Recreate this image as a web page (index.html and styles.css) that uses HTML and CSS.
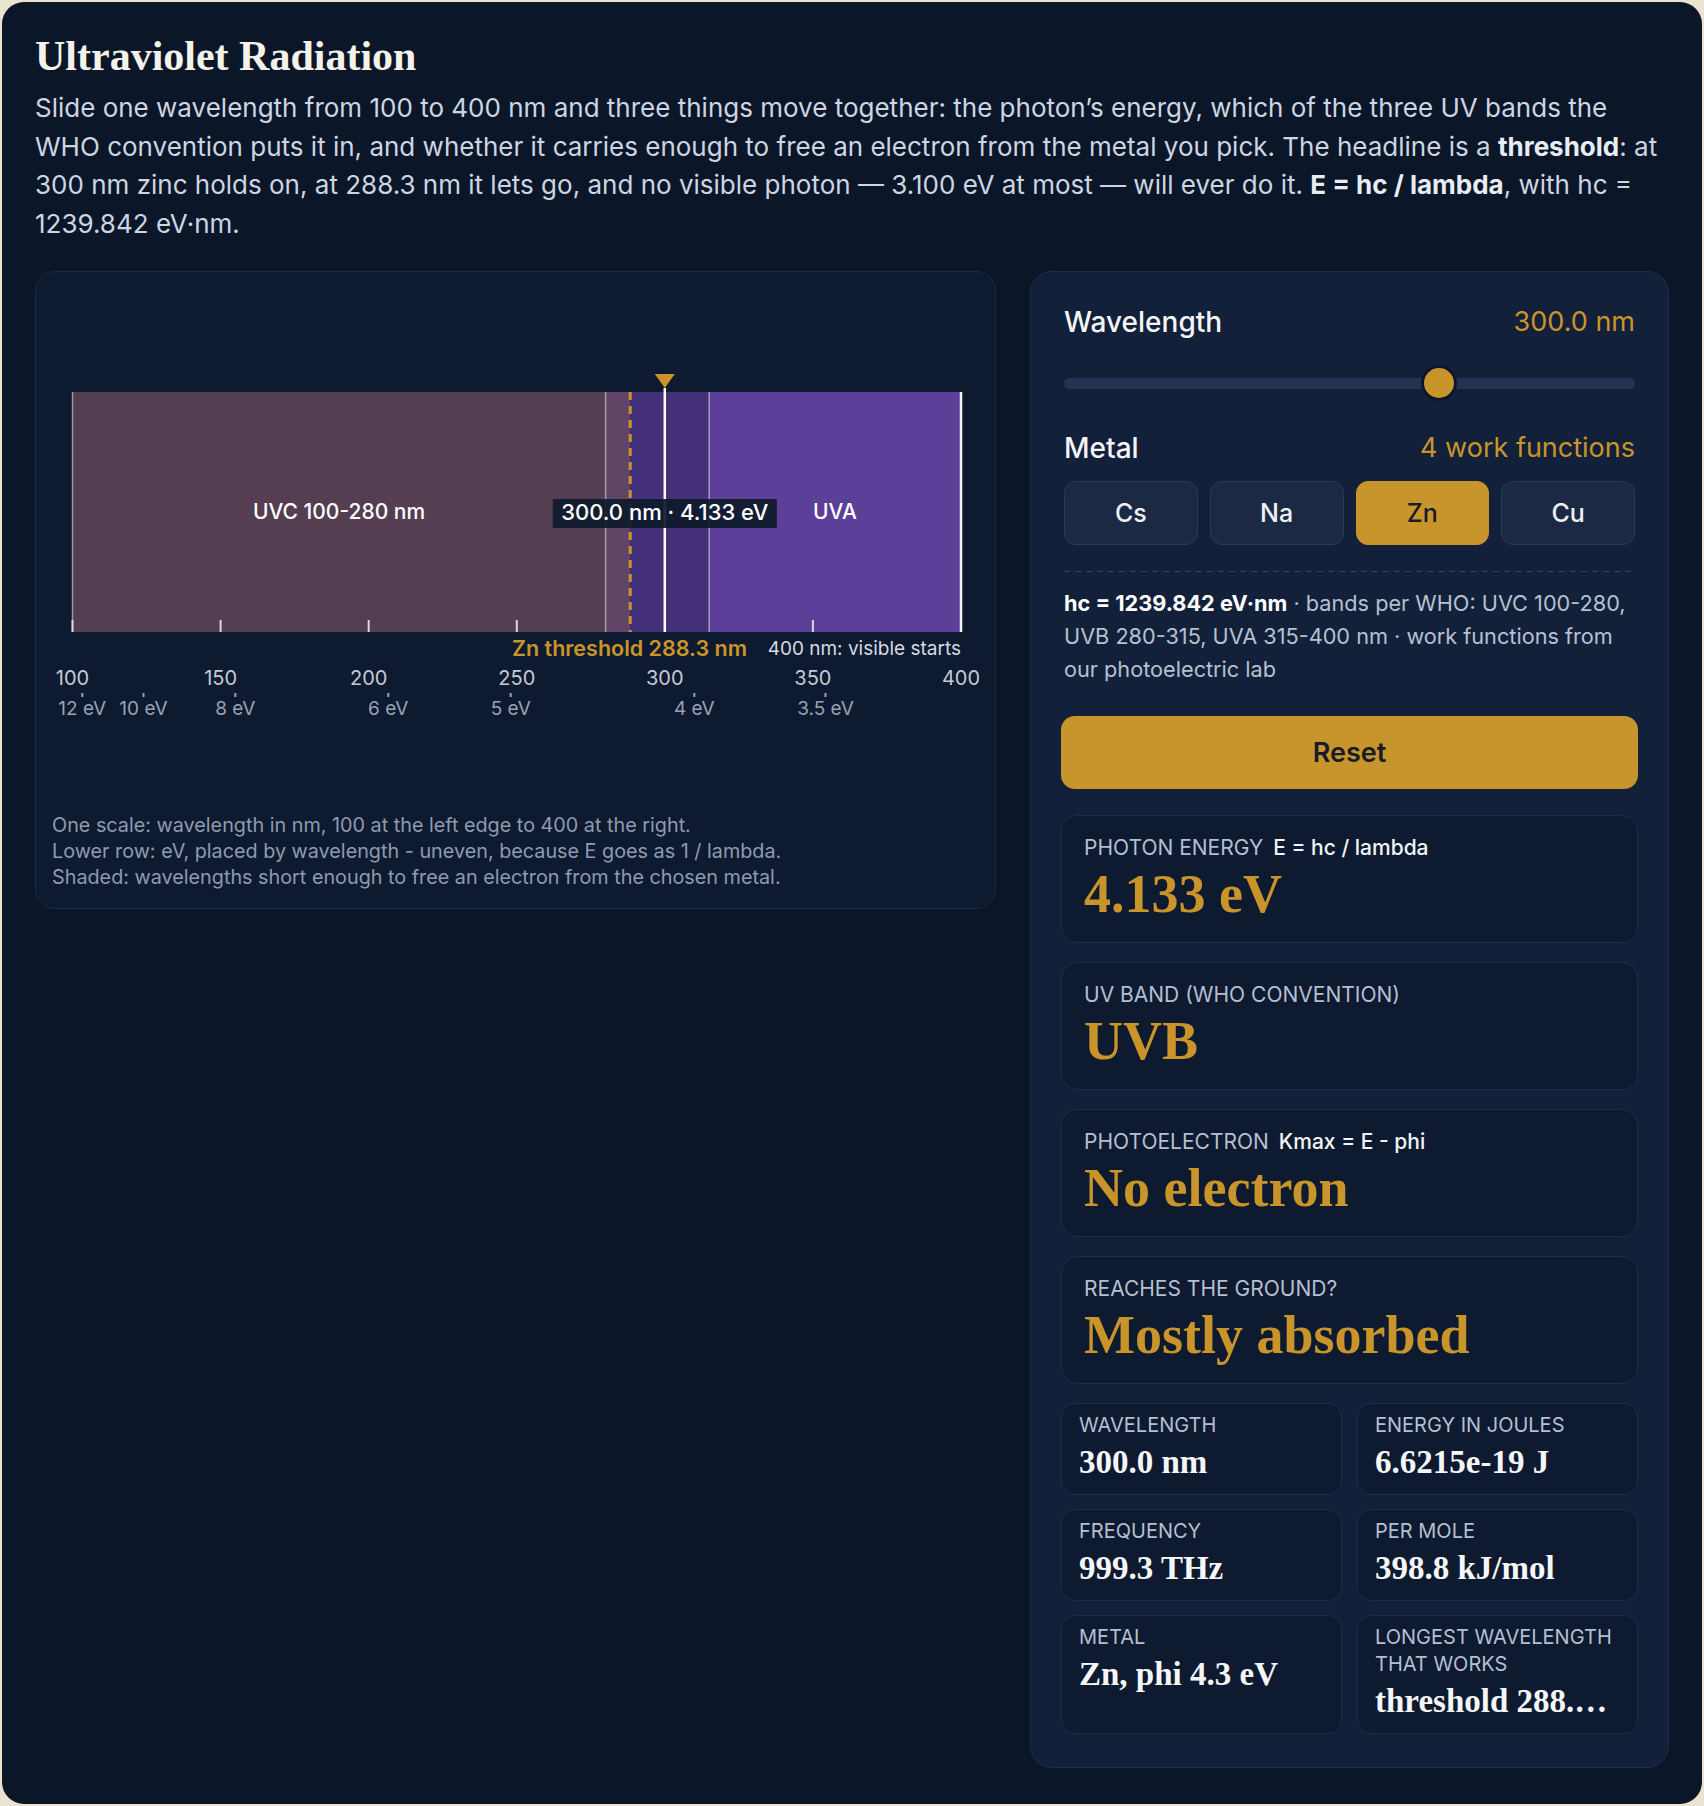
FILE: index.html
```html
<!DOCTYPE html>
<html lang="en">
<head>
    <meta charset="UTF-8">
    <meta name="viewport" content="width=device-width, initial-scale=1.0">
    <title>Ultraviolet Radiation</title>
    <link rel="stylesheet" href="styles.css">
</head>
<body>
    <div class="app">
        <header>
            <h1>Ultraviolet Radiation</h1>
            <p class="intro">Slide one wavelength from 100 to 400 nm and three things move together: the photon’s energy, which of the three UV bands the WHO convention puts it in, and whether it carries enough to free an electron from the metal you pick. The headline is a <b>threshold</b>: at 300 nm zinc holds on, at 288.3 nm it lets go, and no visible photon — 3.100 eV at most — will ever do it. <b>E = hc / lambda</b>, with hc = 1239.842 eV·nm.</p>
        </header>

        <main class="layout">
            <section class="chart-card">
                <svg class="spectrum" width="927" height="500" viewBox="0 0 927 500">
                    <!-- bands -->
                    <rect x="20.5" y="104" width="533.1" height="240" fill="#553e52"/>
                    <rect x="553.6" y="104" width="24.6" height="240" fill="#614566"/>
                    <rect x="578.2" y="104" width="79" height="240" fill="#45307a"/>
                    <rect x="657.2" y="104" width="251.8" height="240" fill="#5c3f99"/>

                    <!-- band edges -->
                    <line x1="20.5" y1="104" x2="20.5" y2="344" class="edge"/>
                    <line x1="553.6" y1="104" x2="553.6" y2="344" class="edge"/>
                    <line x1="657.2" y1="104" x2="657.2" y2="344" class="edge"/>
                    <line x1="909" y1="104" x2="909" y2="344" class="visible-edge"/>

                    <!-- nm ticks -->
                    <g class="tick">
                        <line x1="20.5" y1="332" x2="20.5" y2="344"/>
                        <line x1="168.6" y1="332" x2="168.6" y2="344"/>
                        <line x1="316.7" y1="332" x2="316.7" y2="344"/>
                        <line x1="464.8" y1="332" x2="464.8" y2="344"/>
                        <line x1="760.9" y1="332" x2="760.9" y2="344"/>
                    </g>

                    <text x="287" y="225" class="band-label">UVC 100-280 nm</text>
                    <text x="783" y="225" class="band-label">UVA</text>

                    <!-- threshold + current wavelength -->
                    <line x1="578.2" y1="104" x2="578.2" y2="344" class="threshold"/>
                    <line x1="612.8" y1="100" x2="612.8" y2="344" class="current"/>
                    <polygon points="602.8,86 622.8,86 612.8,100" fill="#c9952b"/>

                    <rect x="500.8" y="211" width="224" height="29" class="value-box"/>
                    <text x="612.8" y="226" class="value-label">300.0 nm · 4.133 eV</text>

                    <text x="695" y="362" class="threshold-label">Zn threshold 288.3 nm</text>
                    <text x="909" y="362" class="visible-label">400 nm: visible starts</text>

                    <!-- wavelength axis -->
                    <g class="axis-nm">
                        <text x="20.5" y="392">100</text>
                        <text x="168.6" y="392">150</text>
                        <text x="316.7" y="392">200</text>
                        <text x="464.8" y="392">250</text>
                        <text x="612.8" y="392">300</text>
                        <text x="760.9" y="392">350</text>
                        <text x="909" y="392">400</text>
                    </g>

                    <!-- energy row, placed by wavelength -->
                    <g class="ev-tick">
                        <line x1="30.3" y1="405" x2="30.3" y2="409"/>
                        <line x1="91.5" y1="405" x2="91.5" y2="409"/>
                        <line x1="183.3" y1="405" x2="183.3" y2="409"/>
                        <line x1="336.3" y1="405" x2="336.3" y2="409"/>
                        <line x1="458.7" y1="405" x2="458.7" y2="409"/>
                        <line x1="642.3" y1="405" x2="642.3" y2="409"/>
                        <line x1="773.5" y1="405" x2="773.5" y2="409"/>
                    </g>
                    <g class="axis-ev">
                        <text x="30.3" y="422">12 eV</text>
                        <text x="91.5" y="422">10 eV</text>
                        <text x="183.3" y="422">8 eV</text>
                        <text x="336.3" y="422">6 eV</text>
                        <text x="458.7" y="422">5 eV</text>
                        <text x="642.3" y="422">4 eV</text>
                        <text x="773.5" y="422">3.5 eV</text>
                    </g>
                </svg>
                <div class="chart-notes">
                    <div>One scale: wavelength in nm, 100 at the left edge to 400 at the right.</div>
                    <div>Lower row: eV, placed by wavelength - uneven, because E goes as 1 / lambda.</div>
                    <div>Shaded: wavelengths short enough to free an electron from the chosen metal.</div>
                </div>
            </section>

            <aside class="panel">
                <div class="controls">
                    <div class="control-row">
                        <span class="control-name">Wavelength</span>
                        <span class="control-value">300.0 nm</span>
                    </div>
                    <input type="range" class="slider" min="100" max="400" step="0.1" value="300">

                    <div class="control-row metal-row">
                        <span class="control-name">Metal</span>
                        <span class="control-value">4 work functions</span>
                    </div>
                    <div class="metals">
                        <button type="button" class="metal">Cs</button>
                        <button type="button" class="metal">Na</button>
                        <button type="button" class="metal active">Zn</button>
                        <button type="button" class="metal">Cu</button>
                    </div>

                    <div class="divider"></div>
                    <p class="source"><b>hc = 1239.842 eV·nm</b> · bands per WHO: UVC 100-280, UVB 280-315, UVA 315-400 nm · work functions from our photoelectric lab</p>
                </div>

                <button type="button" class="reset">Reset</button>

                <div class="result">
                    <div class="result-label"><span class="cap">Photon energy</span><span class="formula">E = hc / lambda</span></div>
                    <div class="result-value">4.133 eV</div>
                </div>
                <div class="result">
                    <div class="result-label"><span class="cap">UV band (WHO convention)</span></div>
                    <div class="result-value">UVB</div>
                </div>
                <div class="result">
                    <div class="result-label"><span class="cap">Photoelectron</span><span class="formula">Kmax = E - phi</span></div>
                    <div class="result-value">No electron</div>
                </div>
                <div class="result">
                    <div class="result-label"><span class="cap">Reaches the ground?</span></div>
                    <div class="result-value">Mostly absorbed</div>
                </div>

                <div class="stats">
                    <div class="stat">
                        <div class="stat-label">Wavelength</div>
                        <div class="stat-value">300.0 nm</div>
                    </div>
                    <div class="stat">
                        <div class="stat-label">Energy in joules</div>
                        <div class="stat-value">6.6215e-19 J</div>
                    </div>
                    <div class="stat">
                        <div class="stat-label">Frequency</div>
                        <div class="stat-value">999.3 THz</div>
                    </div>
                    <div class="stat">
                        <div class="stat-label">Per mole</div>
                        <div class="stat-value">398.8 kJ/mol</div>
                    </div>
                    <div class="stat">
                        <div class="stat-label">Metal</div>
                        <div class="stat-value">Zn, phi 4.3 eV</div>
                    </div>
                    <div class="stat">
                        <div class="stat-label">Longest wavelength that works</div>
                        <div class="stat-value">threshold 288.3 nm</div>
                    </div>
                </div>
            </aside>
        </main>
    </div>
</body>
</html>
```

FILE: styles.css
```css
* {
    box-sizing: border-box;
}
body {
    margin: 0;
    background-color: #e9e3cf;
    font-family: Inter, "Noto Sans", sans-serif;
    color: #cdd5e1;
}
.app {
    margin: 2px;
    min-height: calc(100vh - 4px);
    padding: 29px 33px 36px;
    background-color: #0b1729;
    border-radius: 22px;
}
h1 {
    margin: 0;
    font-family: "Liberation Serif", serif;
    font-size: 42px;
    line-height: 50px;
    font-weight: 700;
    color: #f5f2ea;
}
.intro {
    margin: 8px 0 0;
    font-size: 26px;
    line-height: 38.5px;
    color: #cdd5e1;
}
.intro b {
    color: #e8edf4;
    font-weight: 700;
}
.layout {
    display: grid;
    grid-template-columns: 1.5fr 1fr;
    gap: 34px;
    align-items: start;
    margin-top: 28px;
}

/* chart */
.chart-card {
    padding: 16px 16px 18px;
    background-color: #0e1a2f;
    border: 1px solid #1d2a42;
    border-radius: 20px;
}
.spectrum {
    display: block;
    font-family: Inter, sans-serif;
}
.edge {
    stroke: rgba(225, 225, 235, 0.6);
    stroke-width: 1.5;
}
.visible-edge {
    stroke: #f2f2f6;
    stroke-width: 2.5;
}
.tick line {
    stroke: #d6d9e2;
    stroke-width: 2;
}
.threshold {
    stroke: #c9952b;
    stroke-width: 3;
    stroke-dasharray: 8 6;
}
.current {
    stroke: #ffffff;
    stroke-width: 2.5;
}
.band-label {
    fill: #ffffff;
    font-size: 21px;
    font-weight: 500;
    text-anchor: middle;
    dominant-baseline: middle;
}
.value-box {
    fill: #0f1a2d;
    opacity: 0.92;
}
.value-label {
    fill: #ffffff;
    font-size: 22px;
    font-weight: 500;
    text-anchor: middle;
    dominant-baseline: middle;
}
.threshold-label {
    fill: #c9952b;
    font-size: 21.5px;
    font-weight: 600;
    text-anchor: end;
    dominant-baseline: middle;
}
.visible-label {
    fill: #d5dae3;
    font-size: 19px;
    text-anchor: end;
    dominant-baseline: middle;
}
.axis-nm text {
    fill: #c3cad6;
    font-size: 20px;
    text-anchor: middle;
    dominant-baseline: middle;
}
.ev-tick line {
    stroke: #98a2b4;
    stroke-width: 2;
}
.axis-ev text {
    fill: #98a2b4;
    font-size: 19px;
    text-anchor: middle;
    dominant-baseline: middle;
}
.chart-notes {
    margin-top: 24px;
    font-size: 19.8px;
    line-height: 26px;
    color: #8f9bb0;
}

/* side panel */
.panel {
    padding: 33px 30px 33px;
    background-color: #13203a;
    border: 1px solid #1f2d48;
    border-radius: 22px;
}
.controls {
    padding: 0 3px;
}
.control-row {
    display: flex;
    justify-content: space-between;
    align-items: center;
    font-size: 27px;
    line-height: 34px;
}
.control-name {
    color: #f3f5f9;
    font-size: 28px;
    font-weight: 500;
}
.control-value {
    color: #c9952b;
}
.slider {
    -webkit-appearance: none;
    appearance: none;
    display: block;
    width: 100%;
    height: 36px;
    margin: 26px 0 0;
    background: transparent;
}
.slider::-webkit-slider-runnable-track {
    height: 11px;
    border-radius: 6px;
    background-color: #243351;
}
.slider::-webkit-slider-thumb {
    -webkit-appearance: none;
    width: 36px;
    height: 36px;
    margin-top: -12.5px;
    border-radius: 50%;
    background-color: #c9952b;
    border: 3px solid #0b1729;
}
.metal-row {
    margin-top: 30px;
}
.metals {
    display: grid;
    grid-template-columns: repeat(4, 1fr);
    gap: 12px;
    margin-top: 16px;
}
.metal {
    height: 64px;
    border: 1px solid #2a3a58;
    border-radius: 12px;
    background-color: #1b2944;
    color: #eef1f6;
    font-family: Inter, sans-serif;
    font-size: 25px;
    font-weight: 500;
    cursor: pointer;
}
.metal.active {
    background-color: #c8952c;
    border-color: #c8952c;
    color: #151c28;
}
.divider {
    height: 1px;
    margin-top: 26px;
    background: repeating-linear-gradient(90deg, #35455f 0 6px, transparent 6px 11px);
}
.source {
    margin: 15px 0 0;
    font-size: 21.7px;
    line-height: 33px;
    color: #b6c0d1;
}
.source b {
    color: #ffffff;
    font-weight: 700;
}
.reset {
    display: block;
    width: 100%;
    height: 73px;
    margin-top: 30px;
    border: none;
    border-radius: 14px;
    background-color: #c8952c;
    color: #161c27;
    font-family: Inter, sans-serif;
    font-size: 27px;
    font-weight: 600;
    cursor: pointer;
}
.result {
    margin-top: 19px;
    padding: 19px 22px;
    background-color: #0e1a2f;
    border: 1px solid #1e2c46;
    border-radius: 16px;
}
.reset + .result {
    margin-top: 26px;
}
.result-label {
    font-size: 21px;
    line-height: 26px;
    color: #b5bfd1;
}
.cap {
    text-transform: uppercase;
}
.formula {
    margin-left: 10px;
    color: #f1f4f8;
    font-weight: 500;
}
.result-value {
    margin-top: 5px;
    font-family: "Liberation Serif", serif;
    font-size: 54px;
    line-height: 57px;
    font-weight: 700;
    color: #c9952b;
}
.stats {
    display: grid;
    grid-template-columns: 1fr 1fr;
    gap: 14px 15px;
    margin-top: 19px;
}
.stat {
    min-width: 0;
    padding: 8px 17px 14px;
    background-color: #0e1a2f;
    border: 1px solid #1e2c46;
    border-radius: 14px;
}
.stat-label {
    font-size: 20px;
    line-height: 27px;
    color: #b5bfd1;
    text-transform: uppercase;
}
.stat-value {
    margin-top: 5px;
    font-family: "Liberation Serif", serif;
    font-size: 33px;
    line-height: 36px;
    font-weight: 700;
    color: #f5f6f8;
    white-space: nowrap;
    overflow: hidden;
    text-overflow: ellipsis;
}
```
